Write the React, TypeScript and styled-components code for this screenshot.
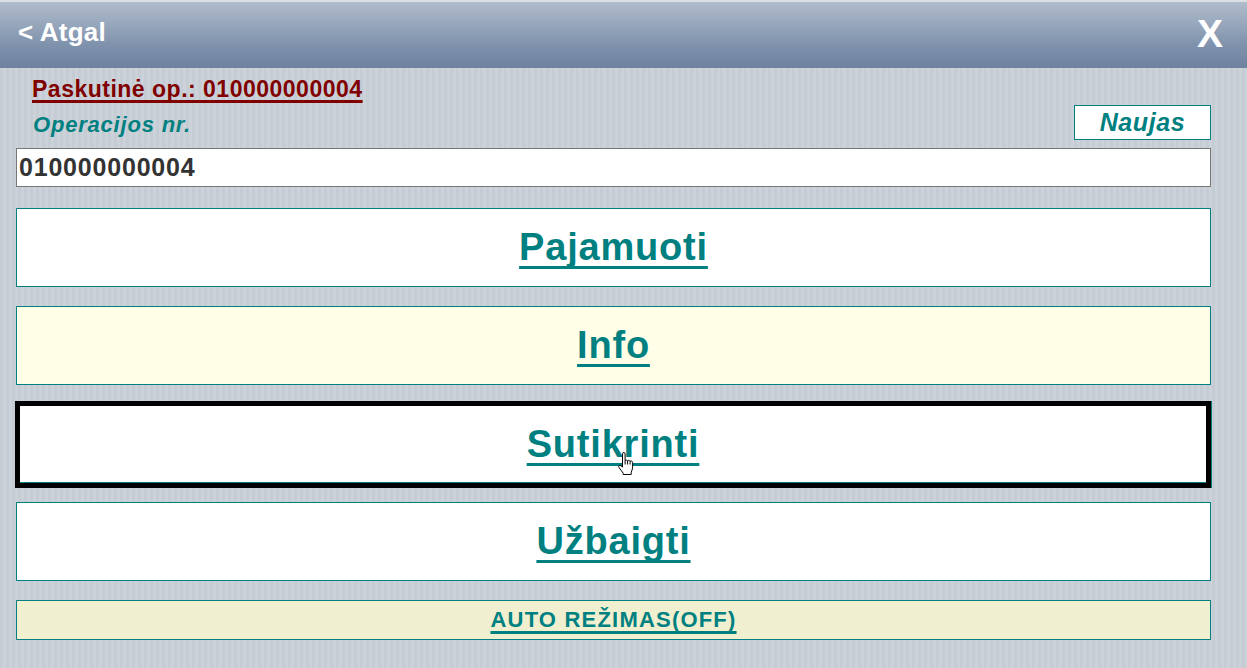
import React from 'react'
import styled, { createGlobalStyle, css } from 'styled-components'

const GlobalStyle = createGlobalStyle`
  html, body {
    margin: 0;
    padding: 0;
    height: 100%;
  }

  body {
    font-family: "Liberation Sans", Arial, sans-serif;
    background: repeating-linear-gradient(
      90deg,
      #c5ccd4 0px,
      #c5ccd4 3px,
      #ccd2d9 3px,
      #ccd2d9 6px
    );
  }
`

const Page = styled.div`
  width: 1247px;
  height: 668px;
  overflow: hidden;
`

const Header = styled.div`
  height: 68px;
  box-sizing: border-box;
  border-top: 2px solid #dcdfe3;
  background: linear-gradient(to bottom, #b1bccb 0%, #96a6bb 35%, #7f92ad 65%, #6e829f 100%);
  display: flex;
  align-items: center;
  justify-content: space-between;
  padding: 0 24px 6px 18px;
  color: #fff;
  font-weight: bold;
`

const BackLink = styled.div`
  font-size: 26px;
  letter-spacing: 0.2px;
`

const CloseButton = styled.div`
  font-size: 39px;
  line-height: 1;
  padding-top: 2px;
`

const Main = styled.div`
  padding: 0 36px 0 16px;
`

const LastOp = styled.div`
  margin-top: 9px;
  padding-left: 16px;
  font-size: 23px;
  line-height: 25px;
  font-weight: bold;
  letter-spacing: 0.5px;
  color: #800000;
  text-decoration: underline;
  text-decoration-thickness: 3px;
  text-underline-offset: 3px;
  text-decoration-skip-ink: none;
`

const LabelRow = styled.div`
  margin-top: 3px;
  display: flex;
  justify-content: space-between;
  align-items: flex-end;
`

const Label = styled.div`
  padding: 0 0 3px 17px;
  font-size: 22px;
  line-height: 25px;
  font-weight: bold;
  font-style: italic;
  letter-spacing: 0.8px;
  color: #008080;
`

const NewButton = styled.div`
  width: 137px;
  height: 35px;
  box-sizing: border-box;
  border: 1px solid #008080;
  background: #fff;
  display: flex;
  align-items: center;
  justify-content: center;
  font-size: 25px;
  font-weight: bold;
  font-style: italic;
  letter-spacing: 0.6px;
  color: #008080;
`

const NumberInput = styled.div`
  margin-top: 8px;
  height: 39px;
  box-sizing: border-box;
  border: 1px solid #777;
  background: #fff;
  display: flex;
  align-items: center;
  padding-left: 2px;
  font-size: 25px;
  font-weight: bold;
  letter-spacing: 0.8px;
  color: #333;
`

const Actions = styled.div`
  margin-top: 21px;
  display: flex;
  flex-direction: column;
  gap: 19px;
`

const ActionButton = styled.div<{ $bg?: string; $focused?: boolean; $small?: boolean }>`
  position: relative;
  height: ${p => (p.$small ? 40 : 79)}px;
  box-sizing: border-box;
  border: 1px solid #008080;
  background: ${p => p.$bg || '#fff'};
  display: flex;
  align-items: center;
  justify-content: center;
  color: #008080;
  font-weight: bold;
  text-decoration: underline;
  text-decoration-skip-ink: none;
  font-size: ${p => (p.$small ? 22 : 38)}px;
  letter-spacing: ${p => (p.$small ? 1.2 : 0.8)}px;
  text-decoration-thickness: 3px;
  text-underline-offset: ${p => (p.$small ? 4 : 6)}px;

  ${p => p.$focused && css`
    height: 87px;
    margin: -3px 0 -5px -1px;
    border: 5px solid #000;
    box-shadow: 1px 0 0 #008080, inset 0 -1px 0 #008080;
  `}
`

const Cursor = styled.svg`
  position: absolute;
  left: 598px;
  top: 46px;
  width: 17px;
  height: 24px;
`

const HandCursor = () => (
  <Cursor viewBox="0 0 17 24">
    <path
      d="M4.5 1.8C4.5 0.9 5.1 0.5 5.8 0.5C6.5 0.5 7.1 0.9 7.1 1.8V8.6C7.6 8 9.1 8 9.6 8.8C10.1 8.2 11.6 8.2 12.1 9.2C12.6 8.7 14.6 8.9 14.6 10.5V15.3C14.6 17.3 13.7 19 13.2 20.2V22.5H5.2V21.2C4.2 19.7 2.6 17.7 1.1 15.7C0.3 14.6 0.8 13.2 2.1 13.4C3.1 13.6 3.9 14.5 4.5 15.2Z"
      fill="#fff"
      stroke="#000"
      strokeWidth="1"
      strokeLinejoin="round"
    />
    <path d="M7.1 8.6V12.5M9.6 8.8V12.5M12.1 9.2V12.5" stroke="#000" strokeWidth="1" fill="none" />
  </Cursor>
)

const App = () => {
  return (
    <Page>
      <GlobalStyle />
      <Header>
        <BackLink>&lt; Atgal</BackLink>
        <CloseButton>X</CloseButton>
      </Header>
      <Main>
        <LastOp>Paskutinė op.: 010000000004</LastOp>
        <LabelRow>
          <Label>Operacijos nr.</Label>
          <NewButton>Naujas</NewButton>
        </LabelRow>
        <NumberInput>010000000004</NumberInput>
        <Actions>
          <ActionButton>Pajamuoti</ActionButton>
          <ActionButton $bg="#ffffe8">Info</ActionButton>
          <ActionButton $focused>
            Sutikrinti
            <HandCursor />
          </ActionButton>
          <ActionButton>Užbaigti</ActionButton>
          <ActionButton $bg="#f0f0d0" $small>AUTO REŽIMAS(OFF)</ActionButton>
        </Actions>
      </Main>
    </Page>
  )
}

export default App
